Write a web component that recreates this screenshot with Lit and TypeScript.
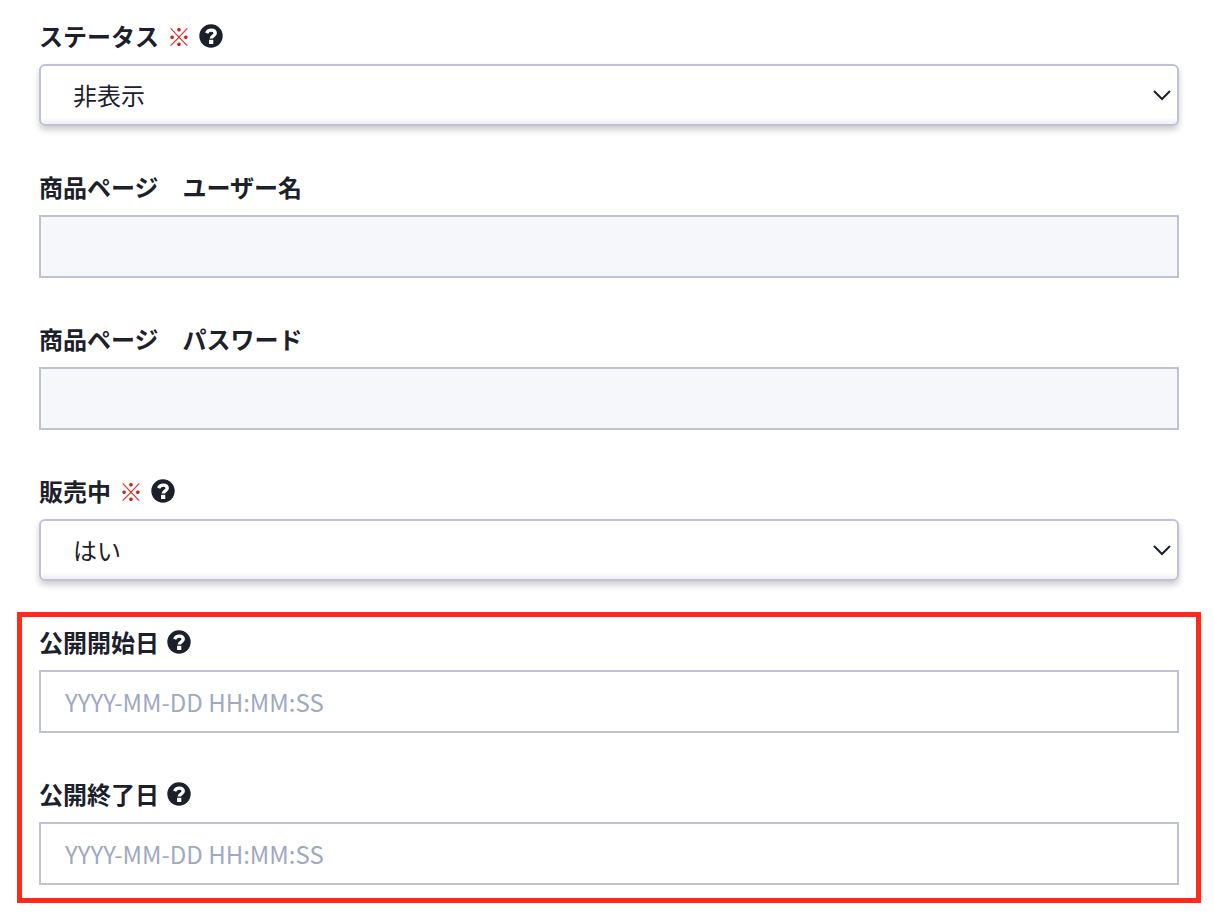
import { LitElement, html, css, nothing } from "lit";
import { customElement, property } from "lit/decorators.js";

const FONT = css`"Noto Sans CJK JP", sans-serif`;

@customElement("form-field")
class FormField extends LitElement {
  @property() label = "";
  @property() kind: "select" | "text" = "text";
  @property() value = "";
  @property() hint = "";
  @property({ type: Boolean }) required = false;
  @property({ type: Boolean }) help = false;
  @property({ type: Boolean }) locked = false;

  static styles = css`
    :host {
      display: block;
      font-family: ${FONT};
      color: #1c202b;
    }
    .head {
      display: flex;
      align-items: center;
      gap: 8px;
      margin-bottom: 10px;
      font-size: 24px;
      line-height: 36px;
    }
    .name {
      font-weight: 700;
      white-space: pre;
    }
    .mark {
      font-weight: 400;
      color: #cf1f1f;
    }
    .help {
      display: block;
      margin: 0;
      padding: 0;
      border: 0;
      background: none;
      color: inherit;
      cursor: pointer;
    }
    .help svg {
      display: block;
      width: 24px;
      height: 24px;
    }
    .text,
    .choice {
      box-sizing: border-box;
      width: 100%;
      margin: 0;
      border: 2px solid #bfc2d4;
      background: #fff;
      color: inherit;
      font-family: inherit;
      font-size: 24px;
      line-height: 36px;
    }
    .text {
      display: block;
      height: 63px;
      padding: 0 24px;
      border-radius: 0;
    }
    .text::placeholder {
      color: #a0a9bf;
      opacity: 1;
    }
    .text:disabled {
      background: #f6f7fa;
    }
    .picker {
      display: grid;
      align-items: center;
    }
    .picker > * {
      grid-area: 1 / 1;
    }
    .choice {
      appearance: none;
      height: 62px;
      padding: 0 48px 0 32px;
      border-radius: 6px;
      background: linear-gradient(to top, #efeff4, #fff 7px);
      box-shadow: 0 4px 6px rgba(0, 0, 0, 0.2);
    }
    .arrow {
      justify-self: end;
      width: 18px;
      height: 12px;
      margin-right: 8px;
      pointer-events: none;
    }
  `;

  render() {
    return html`
      <div class="head">
        <label class="name" for="control">${this.label}</label>
        ${this.required ? html`<span class="mark">※</span>` : nothing}
        ${this.help
          ? html`<button class="help" type="button" aria-label="?">
              <svg viewBox="0 0 24 24" aria-hidden="true">
                <circle cx="12" cy="12" r="11.7" fill="currentColor" />
                <path
                  d="M7.6 9.1C8.5 7 10 6.1 12.1 6.1c2.5 0 4.1 1.2 4.1 3.1 0 2.7-3.8 2.6-3.9 5.3"
                  fill="none"
                  stroke="#fff"
                  stroke-width="3.4"
                />
                <path d="M10.1 15.8h4.2v4.2h-4.2z" fill="#fff" />
              </svg>
            </button>`
          : nothing}
      </div>
      ${this.kind === "select"
        ? html`<div class="picker">
            <select class="choice" id="control">
              <option>${this.value}</option>
            </select>
            <svg class="arrow" viewBox="0 0 18 12" aria-hidden="true">
              <path d="M1 2l8 8 8-8" fill="none" stroke="#1c202b" stroke-width="2" />
            </svg>
          </div>`
        : html`<input
            class="text"
            id="control"
            type="text"
            placeholder=${this.hint}
            ?disabled=${this.locked}
          />`}
    `;
  }
}

@customElement("app-root")
class AppRoot extends LitElement {
  static styles = css`
    :host {
      display: block;
      background: #fff;
    }
    .page {
      padding: 18px 13px 15px 17px;
    }
    .fields {
      display: grid;
      gap: 43px;
    }
    .plain {
      padding: 0 22px;
      margin-bottom: 31px;
    }
    .framed {
      padding: 7px 17px 13px;
      border: 5px solid #ff2a1a;
    }
  `;

  render() {
    return html`
      <form class="page">
        <div class="fields plain">
          <form-field label="ステータス" kind="select" value="非表示" required help></form-field>
          <form-field label="商品ページ　ユーザー名" locked></form-field>
          <form-field label="商品ページ　パスワード" locked></form-field>
          <form-field label="販売中" kind="select" value="はい" required help></form-field>
        </div>
        <div class="fields framed">
          <form-field label="公開開始日" hint="YYYY-MM-DD HH:MM:SS" help></form-field>
          <form-field label="公開終了日" hint="YYYY-MM-DD HH:MM:SS" help></form-field>
        </div>
      </form>
    `;
  }
}
